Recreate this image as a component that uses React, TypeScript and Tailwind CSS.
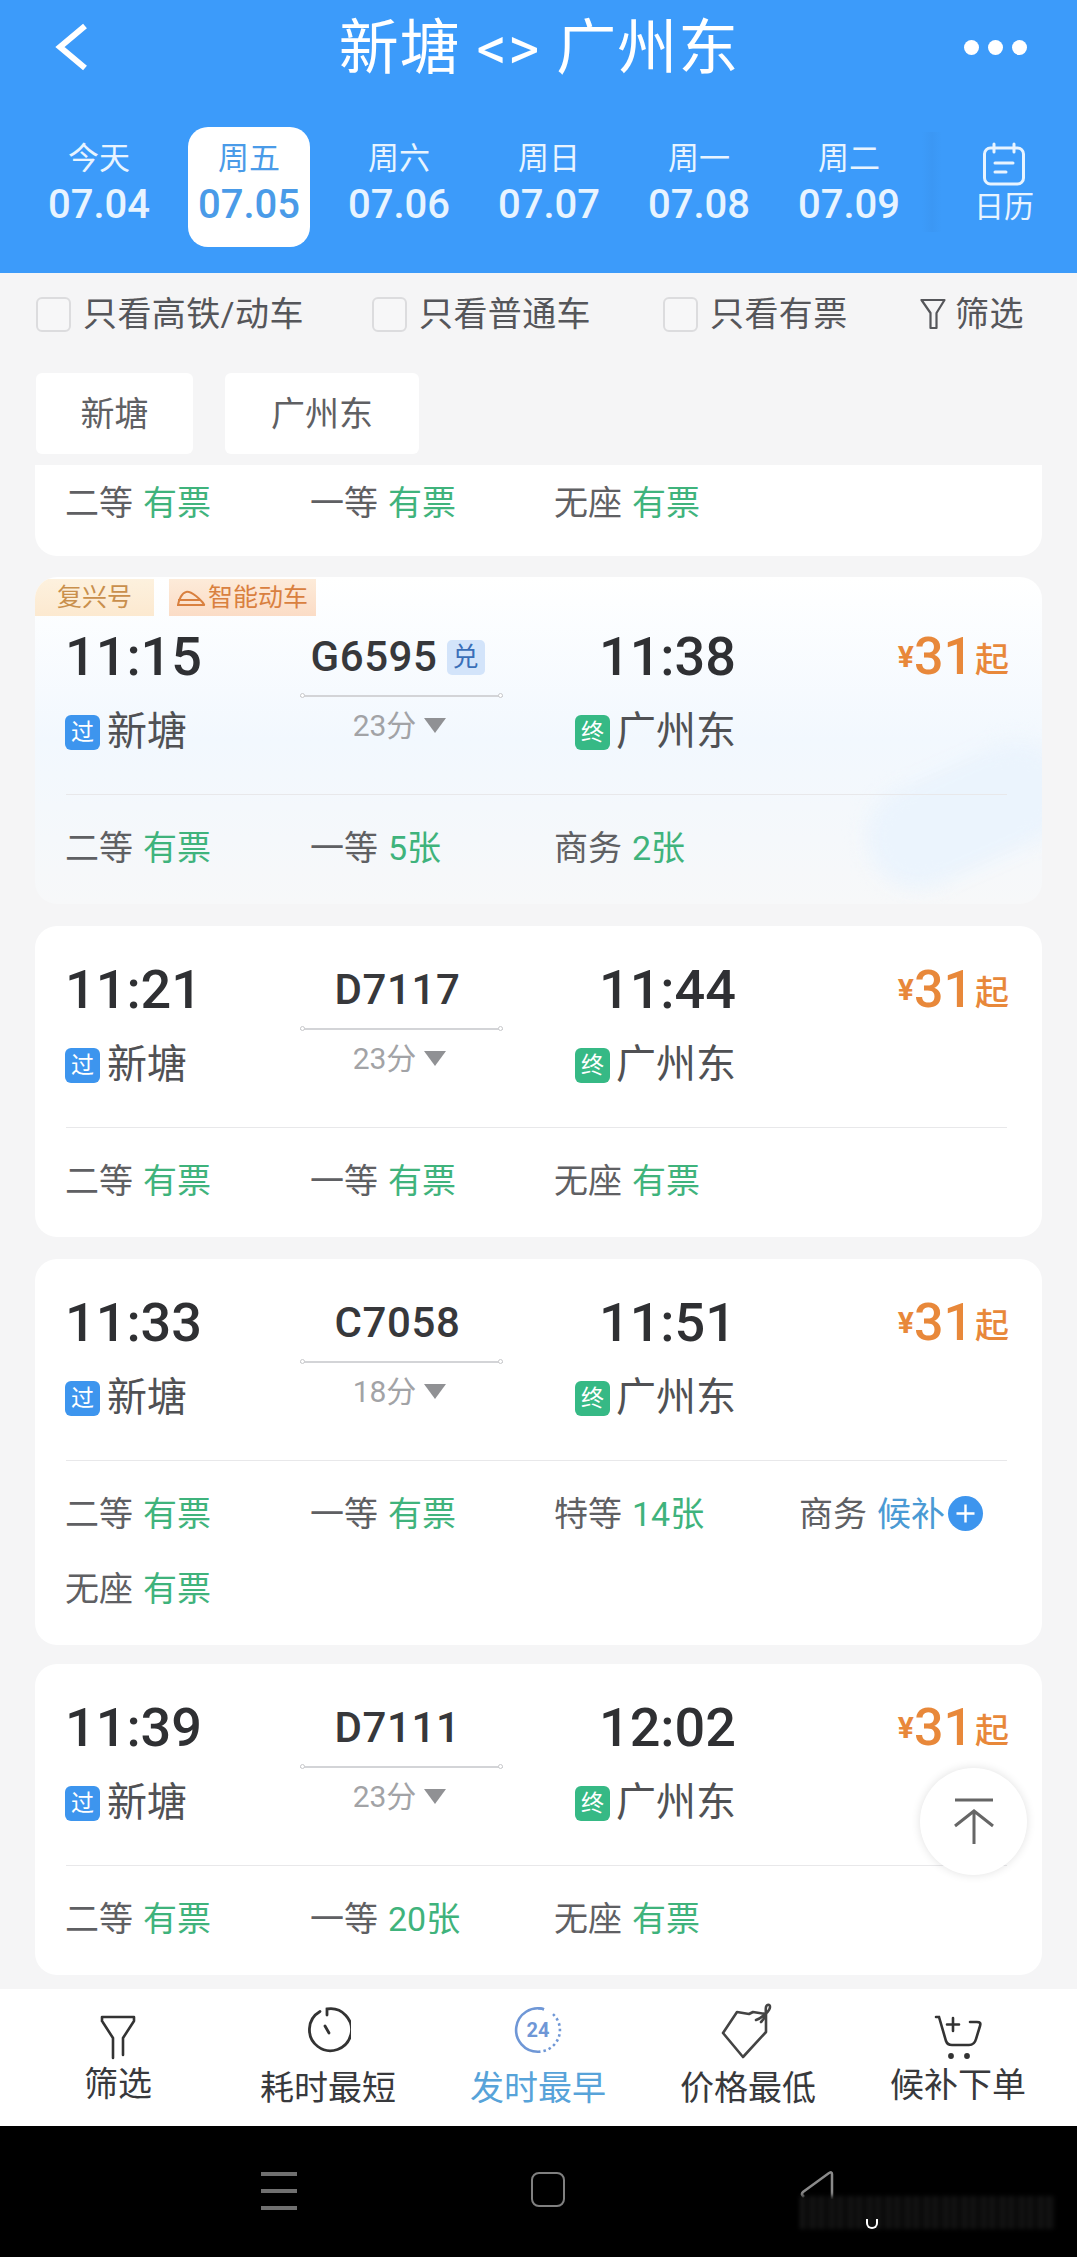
type Seat = { name: string; value: string; wait?: boolean };

interface TrainProps {
  dep: string;
  no: string;
  mins: string;
  arr: string;
  seats: Seat[];
  featured?: boolean;
  className?: string;
}

const dates = [
  { label: "今天", date: "07.04" },
  { label: "周五", date: "07.05", active: true },
  { label: "周六", date: "07.06" },
  { label: "周日", date: "07.07" },
  { label: "周一", date: "07.08" },
  { label: "周二", date: "07.09" },
];

function SeatGrid({ seats }: { seats: Seat[] }) {
  return (
    <div className="grid grid-cols-[245px_244px_245px_200px] pl-[30px]">
      {seats.map((s) => (
        <div key={s.name} className="flex h-[75px] items-center text-[34px] leading-none text-[#5f6063]">
          <span>{s.name}</span>
          <span className={s.wait ? "ml-[10px] text-[#4a9ad4]" : "ml-[10px] text-[#3fb37c]"}>{s.value}</span>
          {s.wait && (
            <span className="ml-[3px] flex h-[35px] w-[35px] items-center justify-center rounded-full bg-[#3d95ee]">
              <svg width="21" height="21" viewBox="0 0 21 21" stroke="#fff" strokeWidth="2.4">
                <path d="M1.5 10.5h18M10.5 1.5v18" />
              </svg>
            </span>
          )}
        </div>
      ))}
    </div>
  );
}

function TrainCard({ dep, no, mins, arr, seats, featured, className = "" }: TrainProps) {
  return (
    <div
      className={`relative mx-[35px] overflow-hidden rounded-[22px] ${
        featured ? "bg-gradient-to-b from-white via-[#f2f8fe] to-[#f7f8f9] pt-[16px]" : "bg-white"
      } ${className}`}
    >
      {featured && (
        <>
          {/* washed out train in the card corner */}
          <div className="absolute right-[-30px] top-[186px] h-[104px] w-[210px] -rotate-[24deg] rounded-[60px] bg-[#ebf4fd] blur-[10px]" />
          <div className="absolute left-0 top-[2px] flex h-[37px] gap-[15px]">
            <div className="flex w-[119px] items-center justify-center bg-gradient-to-b from-[#fdf1de] to-[#fce9d0] text-[25px] leading-none text-[#c98f4c]">
              复兴号
            </div>
            <div className="flex w-[147px] items-center justify-center gap-[2px] bg-gradient-to-b from-[#fdebd9] to-[#fbdcc6] text-[25px] leading-none text-[#d9803f]">
              <svg width="29" height="18" viewBox="0 0 29 18" fill="none" stroke="#d9803f" strokeWidth="2">
                <path d="M1 16h26c1 0-3-5-8-9-4-3-7-5-10-4C5 4 2 10 1 16Z" />
                <path d="M1 11h22" />
              </svg>
              <span>智能动车</span>
            </div>
          </div>
        </>
      )}

      <div className="relative grid h-[201px] grid-cols-[235px_203px_233px_1fr] pl-[30px] pr-[33px] pt-[34px]">
        <div>
          <div className="flex h-[60px] items-center text-[54px] font-medium leading-none text-[#2f3033]">{dep}</div>
          <div className="mt-[23px] flex h-[44px] items-center text-[40px] leading-none text-[#505154]">
            <span className="mr-[7px] flex h-[35px] w-[35px] items-center justify-center rounded-[6px] bg-[#3d95ee] text-[23px] text-white">
              过
            </span>
            新塘
          </div>
        </div>

        <div className="flex flex-col items-center">
          <div className="flex h-[60px] items-center pr-[8px] text-[42px] font-medium leading-none tracking-[0.6px] text-[#37383b]">
            {no}
            {no === "G6595" && (
              <span className="ml-[9px] flex h-[35px] w-[38px] items-center justify-center rounded-[5px] bg-[#d3e4fa] text-[26px] font-normal tracking-normal text-[#3a6fb8]">
                兑
              </span>
            )}
          </div>
          <div className="relative mt-[8px] h-[1.5px] w-full bg-[#d3d4d7]">
            <span className="absolute left-0 top-[-2px] h-[5px] w-[5px] rounded-full border border-[#c8c9cc] bg-white" />
            <span className="absolute right-0 top-[-2px] h-[5px] w-[5px] rounded-full border border-[#c8c9cc] bg-white" />
          </div>
          <div className="mt-[11px] flex h-[36px] items-center pr-[4px] text-[30px] leading-none text-[#a2a3a6]">
            {mins}
            <svg className="ml-[8px]" width="22" height="15" viewBox="0 0 22 15" fill="#909194">
              <path d="M0 0h22L11 15Z" />
            </svg>
          </div>
        </div>

        <div className="flex flex-col items-end">
          <div className="flex h-[60px] items-center text-[54px] font-medium leading-none text-[#2f3033]">{arr}</div>
          <div className="mt-[23px] flex h-[44px] items-center text-[40px] leading-none text-[#505154]">
            <span className="mr-[6px] flex h-[35px] w-[35px] items-center justify-center rounded-[6px] bg-[#36b985] text-[23px] text-white">
              终
            </span>
            广州东
          </div>
        </div>

        <div className="flex h-[60px] items-center justify-end font-medium leading-none text-[#e8883a]">
          <span className="text-[30px] font-bold">¥</span>
          <span className="text-[52px]">31</span>
          <span className="ml-[2px] mt-[6px] text-[34px]">起</span>
        </div>
      </div>

      <div className="relative ml-[31px] mr-[35px] h-px bg-[#e8e8ea]" />
      <div className="relative pb-[19px] pt-[15px]">
        <SeatGrid seats={seats} />
      </div>
    </div>
  );
}

function NavIcon({ index }: { index: number }) {
  const cls = "absolute";
  if (index === 0)
    return (
      <svg className={cls} style={{ top: 25, left: 86 }} width="38" height="46" viewBox="0 0 38 46" fill="none" stroke="#333" strokeWidth="2.6" strokeLinejoin="round" strokeLinecap="round">
        <path d="M3 7V3h32v4L24 24v17M14 44V24L3 7" />
      </svg>
    );
  if (index === 1)
    return (
      <svg className={cls} style={{ top: 18, left: 82 }} width="46" height="46" viewBox="0 0 46 46" fill="none" stroke="#333" strokeWidth="2.8" strokeLinecap="round">
        <path d="M15 4.5a21 21 0 1 0 7-2.5v6" />
        <path d="M20 19l4 7" />
      </svg>
    );
  if (index === 2)
    return (
      <div className="absolute left-[81px] top-[17px] flex h-[48px] w-[48px] items-center justify-center">
        <svg className="absolute inset-0" width="48" height="48" viewBox="0 0 48 48" fill="none" stroke="#6f97d6" strokeWidth="2.6">
          <path d="M30 3.2a21.7 21.7 0 1 0-6 42.5" />
          <path d="M24 2.3c3 0 4 .3 6 .9" />
          <path d="M24 45.7a21.7 21.7 0 0 0 15-37.6" strokeDasharray="2.5 3" />
        </svg>
        <span className="text-[20px] font-bold leading-none text-[#6f97d6]">24</span>
      </div>
    );
  if (index === 3)
    return (
      <svg className={cls} style={{ top: 14, left: 77 }} width="56" height="56" viewBox="0 0 56 56" fill="none" stroke="#444" strokeWidth="2.6" strokeLinejoin="round" strokeLinecap="round">
        <path d="M17 9 3 30l20 24 23-25V11L33 9l-4 2Z" />
        <path d="M36 17c6-2 14-9 14-13 0-3-3-3-4 0-1 4 2 9-5 15" />
      </svg>
    );
  return (
    <svg className={cls} style={{ top: 26, left: 81 }} width="50" height="44" viewBox="0 0 50 44" fill="none" stroke="#333" strokeWidth="2.6" strokeLinecap="round">
      <path d="M2 2h3l7 24c1 3 3 4 6 4h17c4 0 6-2 7-6l4-13c1-3 0-4-3-4h-7" />
      <path d="M19 3v13M13 9.500h12" />
      <circle cx="17" cy="41" r="1.600" fill="#333" />
      <circle cx="33" cy="41" r="1.600" fill="#333" />
    </svg>
  );
}

export default function App() {
  const tabs = [
    { label: "筛选", pt: "pt-[75px]" },
    { label: "耗时最短", pt: "pt-[79px]" },
    { label: "发时最早", pt: "pt-[79px]", active: true },
    { label: "价格最低", pt: "pt-[79px]" },
    { label: "候补下单", pt: "pt-[76px]" },
  ];

  return (
    <div className="relative h-[2257px] w-full overflow-hidden bg-[#f5f5f6] font-['Roboto','Noto_Sans_CJK_SC',sans-serif]">
      {/* Header */}
      <div className="h-[273px] bg-[#3c9bfa] text-white">
        <div className="flex h-[94px] items-center justify-between pl-[54px] pr-[50px]">
          <svg width="34" height="48" viewBox="0 0 34 48" fill="none" stroke="#fff" strokeWidth="6">
            <path d="M31 3 6 24l25 21" />
          </svg>
          <div className="ml-[26px] mt-[4px] text-[60px] leading-none tracking-[1px]">新塘 &lt;&gt; 广州东</div>
          <div className="flex gap-[9px]">
            <span className="h-[15px] w-[15px] rounded-full bg-white" />
            <span className="h-[15px] w-[15px] rounded-full bg-white" />
            <span className="h-[15px] w-[15px] rounded-full bg-white" />
          </div>
        </div>
        <div className="relative flex pl-[24px] pt-[33px]">
          {dates.map((d) => (
            <div key={d.date} className="flex w-[150px] justify-center">
              <div
                className={`flex h-[120px] w-[122px] flex-col items-center pt-[14px] ${
                  d.active ? "rounded-[20px] bg-white text-[#4a9be8]" : "text-[#e8f4ff]"
                }`}
              >
                <span className="h-[36px] text-[31px] leading-[36px]">{d.label}</span>
                <span className="mt-[5px] text-[40px] font-medium leading-[46px]">{d.date}</span>
              </div>
            </div>
          ))}
          <div className="absolute left-[922px] top-[38px] h-[100px] w-[20px] bg-gradient-to-r from-[#3c9bfa] via-[#3b97f4] to-[#3c9bfa]" />
          <div className="ml-[50px] flex flex-col items-center pt-[15px]">
            <svg width="44" height="44" viewBox="0 0 44 44" fill="none" stroke="#e8f4ff" strokeWidth="3" strokeLinecap="round">
              <rect x="2.500" y="6" width="39" height="36" rx="6" />
              <path d="M12 2v8M32 2v8M13 21h18M13 30h11" />
            </svg>
            <span className="mt-[6px] text-[30px] leading-none text-[#e8f4ff]">日历</span>
          </div>
        </div>
      </div>

      {/* Quick filters */}
      <div className="grid h-[82px] grid-cols-[336px_291px_257px_auto] items-center pl-[36px] text-[34px] leading-none tracking-[0.4px] text-[#55565a]">
        {["只看高铁/动车", "只看普通车", "只看有票"].map((t) => (
          <div key={t} className="flex items-center">
            <span className="h-[35px] w-[35px] rounded-[6px] border-2 border-[#dcdcde] bg-[#f7f7f8]" />
            <span className="ml-[12px]">{t}</span>
          </div>
        ))}
        <div className="flex items-center">
          <svg width="26" height="32" viewBox="0 0 26 32" fill="none" stroke="#55565a" strokeWidth="2.2" strokeLinejoin="round">
            <path d="M1.500 2h23l-8 13v15h-6V15Z" />
          </svg>
          <span className="ml-[9px]">筛选</span>
        </div>
      </div>

      {/* Station chips */}
      <div className="ml-[36px] mt-[18px] flex gap-[32px] text-[34px] leading-none text-[#5f6063]">
        <div className="flex h-[81px] w-[157px] items-center justify-center rounded-[6px] bg-white">新塘</div>
        <div className="flex h-[81px] w-[194px] items-center justify-center rounded-[6px] bg-white">广州东</div>
      </div>

      {/* Previous card, scrolled under the chips */}
      <div className="mx-[35px] mt-[11px] h-[91px] rounded-b-[22px] bg-white pt-0">
        <SeatGrid seats={[{ name: "二等", value: "有票" }, { name: "一等", value: "有票" }, { name: "无座", value: "有票" }]} />
      </div>

      <TrainCard
        featured
        className="mt-[21px]"
        dep="11:15"
        no="G6595"
        mins="23分"
        arr="11:38"
        seats={[{ name: "二等", value: "有票" }, { name: "一等", value: "5张" }, { name: "商务", value: "2张" }]}
      />
      <TrainCard
        className="mt-[22px]"
        dep="11:21"
        no="D7117"
        mins="23分"
        arr="11:44"
        seats={[{ name: "二等", value: "有票" }, { name: "一等", value: "有票" }, { name: "无座", value: "有票" }]}
      />
      <TrainCard
        className="mt-[22px]"
        dep="11:33"
        no="C7058"
        mins="18分"
        arr="11:51"
        seats={[
          { name: "二等", value: "有票" },
          { name: "一等", value: "有票" },
          { name: "特等", value: "14张" },
          { name: "商务", value: "候补", wait: true },
          { name: "无座", value: "有票" },
        ]}
      />
      <TrainCard
        className="mt-[19px]"
        dep="11:39"
        no="D7111"
        mins="23分"
        arr="12:02"
        seats={[{ name: "二等", value: "有票" }, { name: "一等", value: "20张" }, { name: "无座", value: "有票" }]}
      />

      {/* Sort bar */}
      <div className="mt-[14px] grid h-[137px] grid-cols-5 bg-white pl-[13px] pr-[14px]">
        {tabs.map((t, i) => (
          <div key={t.label} className={`relative text-center text-[34px] leading-[40px] ${t.pt} ${t.active ? "text-[#57a3d9]" : "text-[#38393c]"}`}>
            <NavIcon index={i} />
            {t.label}
          </div>
        ))}
      </div>

      {/* System nav */}
      <div className="relative h-[140px] bg-black">
        <div className="absolute left-[261px] top-[46px] flex w-[36px] flex-col gap-[13px]">
          <span className="h-[4px] bg-[#707070]" />
          <span className="h-[4px] bg-[#707070]" />
          <span className="h-[4px] bg-[#707070]" />
        </div>
        <div className="absolute left-[531px] top-[46px] h-[35px] w-[34px] rounded-[8px] border-[2.5px] border-[#808080]" />
        <svg className="absolute left-[800px] top-[45px]" width="36" height="30" viewBox="0 0 36 30" fill="none" stroke="#8a8a8a" strokeWidth="2.500">
          <path d="M32 28V3c0-2-1-2-3-1L3 21c-2 2-1 3 1 5" />
        </svg>
        <div className="absolute left-[800px] top-[70px] h-[33px] w-[255px] bg-[repeating-linear-gradient(90deg,#1c1c1c_0,#070707_7px,#161616_13px,#030303_19px)] blur-[2px]" />
        <div className="absolute left-[866px] top-[93px] h-[10px] w-[12px] rounded-b-full border-2 border-t-0 border-white" />
      </div>

      {/* Back to top */}
      <div className="absolute left-[920px] top-[1768px] flex h-[107px] w-[107px] items-center justify-center rounded-full bg-white shadow-[0_0_10px_rgba(0,0,0,0.12)]">
        <svg width="42" height="48" viewBox="0 0 42 48" fill="none" stroke="#666" strokeWidth="3">
          <path d="M2 2h38M2 28 21 13l19 15M21 13v33" />
        </svg>
      </div>
    </div>
  );
}
